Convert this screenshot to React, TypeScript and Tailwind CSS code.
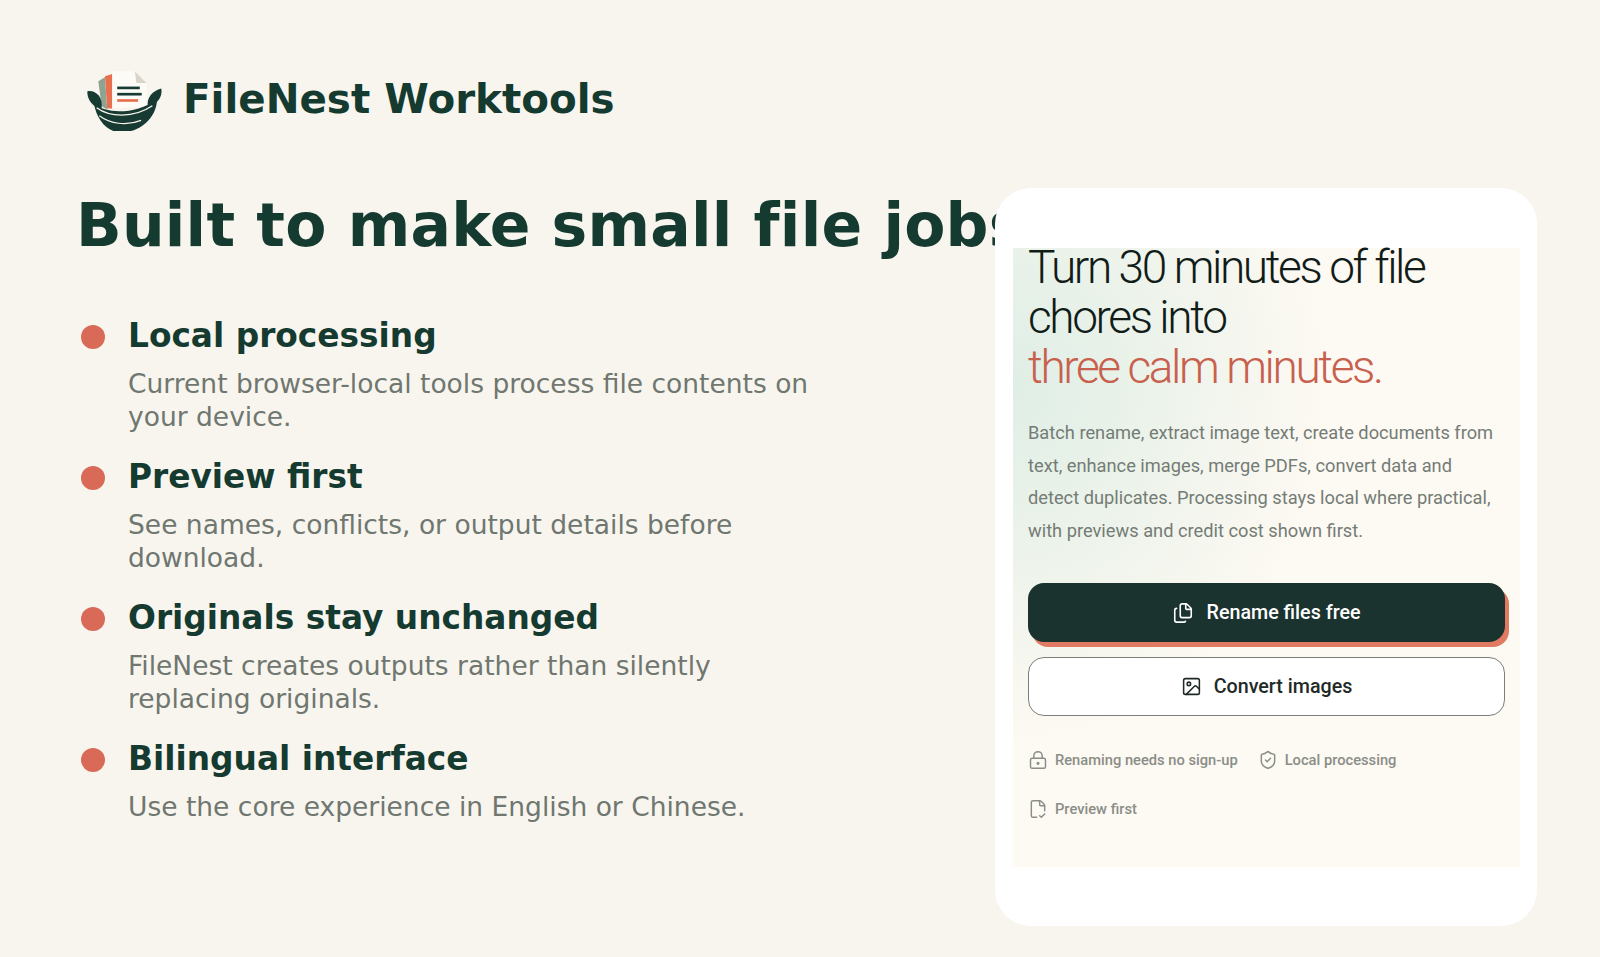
import { Files, Image, LockKeyhole, ShieldCheck, FileCheckCorner } from "lucide-react";

const features = [
  ["Local processing", "Current browser-local tools process file contents on your device."],
  ["Preview first", "See names, conflicts, or output details before download."],
  ["Originals stay unchanged", "FileNest creates outputs rather than silently replacing originals."],
  ["Bilingual interface", "Use the core experience in English or Chinese."],
];

function Logo() {
  return (
    <svg viewBox="45 50 235 190" className="h-[63px] w-[78px] shrink-0">
      <path d="M85 90 L105 78 L112 175 L95 165Z" fill="#8fa393" />
      <path d="M105 75 L127 68 L127 172 L112 172Z" fill="#e8704f" />
      <path d="M127 60 L195 60 L230 95 L230 165 L127 172Z" fill="#fdfbf6" />
      <path d="M195 60 L230 95 L200 95Z" fill="#d9d5ca" />
      <rect x="142" y="106" width="68" height="8" fill="#173b33" />
      <rect x="142" y="125" width="74" height="8" fill="#173b33" />
      <rect x="142" y="144" width="63" height="8" fill="#e8704f" />
      <path d="M52 120 C75 115 100 135 95 172 C70 170 50 145 52 120Z" fill="#173b33" />
      <path d="M275 112 C250 118 228 140 235 168 C260 160 280 140 275 112Z" fill="#173b33" />
      <path d="M72 158 C110 190 200 190 262 144 C262 195 215 246 150 244 C110 242 80 205 72 158Z" fill="#173b33" />
      <path d="M80 170 C118 198 190 203 248 164" fill="none" stroke="#f8f5ee" strokeWidth="4" />
      <path d="M88 194 C120 218 170 226 214 208" fill="none" stroke="#f8f5ee" strokeWidth="3.5" />
    </svg>
  );
}

export default function App() {
  return (
    <div className="flex h-[957px] overflow-hidden bg-[#f8f5ee] font-['DejaVu_Sans',sans-serif]">
      <div className="w-[995px] shrink-0 pl-[77px] pt-[64px]">
        <div className="flex items-center gap-[20px] pl-[8px]">
          <Logo />
          <span className="text-[40.4px] font-bold leading-[70px] text-[#153a30]">FileNest Worktools</span>
        </div>
        <h1 className="-ml-px mt-[55px] whitespace-nowrap text-[60px] font-bold leading-[72px] tracking-[0.2px] text-[#153a30]">
          Built to make small file jobs
        </h1>
        <ul className="mt-[55px] flex flex-col gap-[24.5px]">
          {features.map(([name, text]) => (
            <li key={name} className="flex gap-[23px] pl-[4px]">
              <span className="mt-[9px] h-6 w-6 shrink-0 rounded-full bg-[#d96a58]" />
              <div className="w-[700px]">
                <h2 className="text-[32.8px] font-bold leading-[40px] text-[#153a30]">{name}</h2>
                <p className="mt-[10.5px] text-[26.5px] leading-[33px] text-[#6f7770]">{text}</p>
              </div>
            </li>
          ))}
        </ul>
      </div>
      <div className="relative z-10 mt-[188px] h-[738px] w-[542px] shrink-0 rounded-[36px] bg-white pb-[59px] pl-[18px] pr-[17px] pt-[60px] font-['Roboto',sans-serif]">
        <div className="flow-root h-full bg-[radial-gradient(ellipse_62%_58%_at_0%_22%,#dfeee6_0%,#ecf3ea_45%,#fdf9f3_100%)] px-[15px]">
          <h2 className="-mt-[6px] text-[46px] font-light leading-[50px] tracking-[-2.4px] text-[#111c19]">
            Turn 30 minutes of file chores into <span className="block text-[#c8604e]">three calm minutes.</span>
          </h2>
          <p className="mt-[25px] text-[18.25px] leading-[32.5px] text-[#747c76]">
            Batch rename, extract image text, create documents from text, enhance images, merge PDFs, convert data and detect duplicates. Processing stays local where practical, with previews and credit cost shown first.
          </p>
          <button className="mt-[36px] flex h-[59px] w-[477px] items-center justify-center gap-[12px] rounded-[16px] bg-[#1a332f] text-[19.7px] font-medium text-white shadow-[4px_5px_0_#e07a62]">
            <Files className="h-[22px] w-[22px]" strokeWidth={1.75} />
            Rename files free
          </button>
          <button className="mt-[15px] flex h-[59px] w-[477px] items-center justify-center gap-[12px] rounded-[16px] border border-[#7b7f7c] bg-white text-[19.7px] font-medium text-[#1f2a27]">
            <Image className="h-[21px] w-[21px]" strokeWidth={1.75} />
            Convert images
          </button>
          <div className="mt-[34px] flex flex-wrap gap-x-[20px] gap-y-[29px] text-[14.7px] font-medium leading-[20px] text-[#8a8e87]">
            <span className="flex items-center gap-[7px]"><LockKeyhole className="h-[20px] w-[20px]" strokeWidth={1.75} />Renaming needs no sign-up</span>
            <span className="flex items-center gap-[7px]"><ShieldCheck className="h-[20px] w-[20px]" strokeWidth={1.75} />Local processing</span>
            <span className="flex items-center gap-[7px]"><FileCheckCorner className="h-[20px] w-[20px]" strokeWidth={1.75} />Preview first</span>
          </div>
        </div>
      </div>
    </div>
  );
}
